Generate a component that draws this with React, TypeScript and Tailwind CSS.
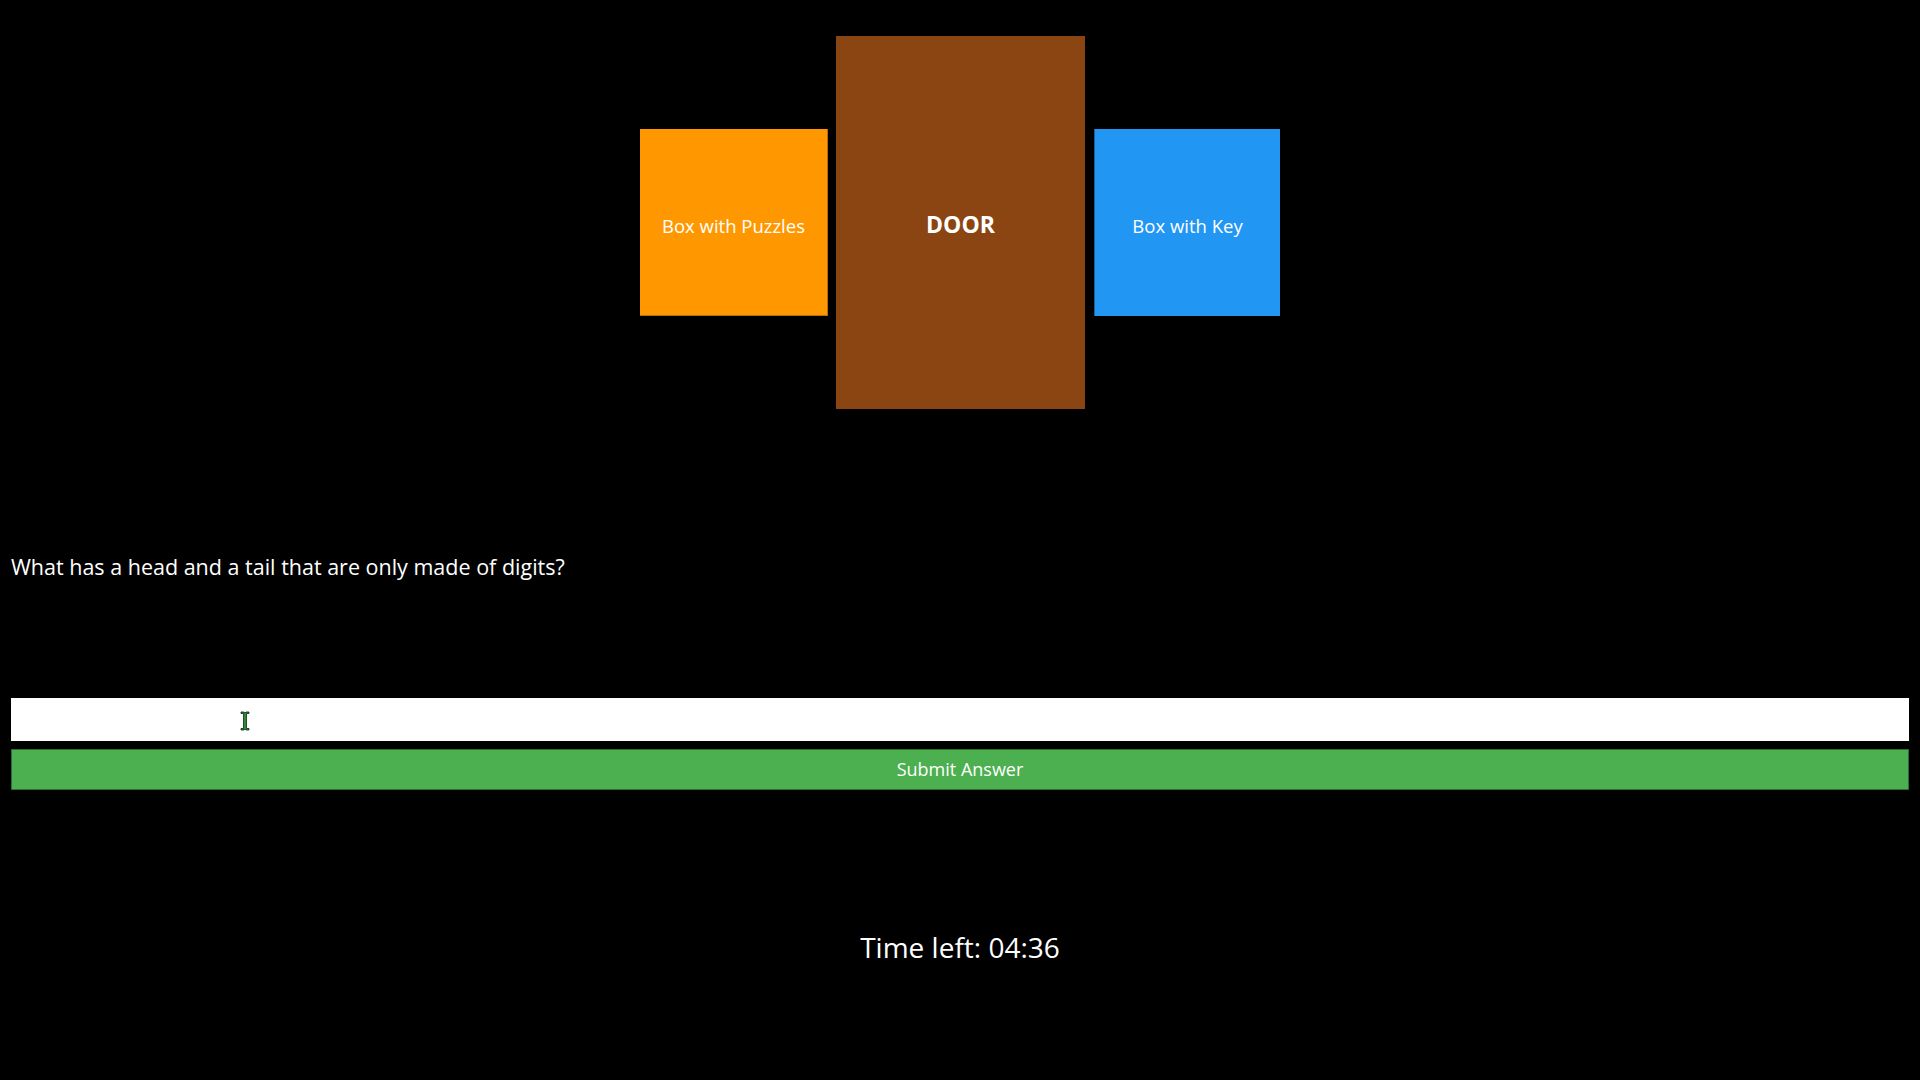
import React, { useState } from "react";

const FONT = { fontFamily: '"Open Sans", "Noto Sans", sans-serif' };

function IBeam() {
  return (
    <svg
      className="absolute left-[229px] top-[13px] pointer-events-none"
      width="10"
      height="20"
      viewBox="0 0 10 20"
    >
      <path d="M1 1h3l1 1 1-1h3v1.5H6.5v15H9V19H6l-1-1-1 1H1v-1.5h2.5v-15H1z" fill="#2e8b3a" stroke="#0b2a10" strokeWidth="0.8" />
    </svg>
  );
}

export default function App() {
  const [answer, setAnswer] = useState("");

  return (
    <div className="min-h-screen bg-black text-white px-[11px] pt-[36px]" style={FONT}>
      {/* Room */}
      <div className="flex justify-center items-center gap-[8px]">
        <div className="w-[188px] h-[187px] bg-[#ff9800] flex items-center justify-center pt-[7px] text-[18.5px] border-r border-b border-[#b86e06]">
          Box with Puzzles
        </div>
        <div className="w-[249px] h-[373px] bg-[#8b4513] flex items-center justify-center pt-[4px] text-[23px] font-bold">
          DOOR
        </div>
        <div className="ml-[1px] w-[186px] h-[187px] bg-[#2196f3] flex items-center justify-center pt-[7px] text-[18.5px] border-l border-[#1a5f98]">
          Box with Key
        </div>
      </div>

      {/* Riddle */}
      <p className="mt-[143px] text-[21.5px] leading-[30px]">
        What has a head and a tail that are only made of digits?
      </p>

      <div className="relative mt-[116px]">
        <input
          type="text"
          value={answer}
          onChange={(e) => setAnswer(e.target.value)}
          className="w-full h-[43px] bg-white text-black px-2 text-[18px] outline-none"
        />
        <IBeam />
      </div>
      <button className="mt-[8px] w-full h-[41px] bg-[#4caf50] border border-[#2f6e31] text-[18px] text-white">
        Submit Answer
      </button>

      <div className="mt-[136px] text-center text-[28px]">Time left: 04:36</div>
    </div>
  );
}
